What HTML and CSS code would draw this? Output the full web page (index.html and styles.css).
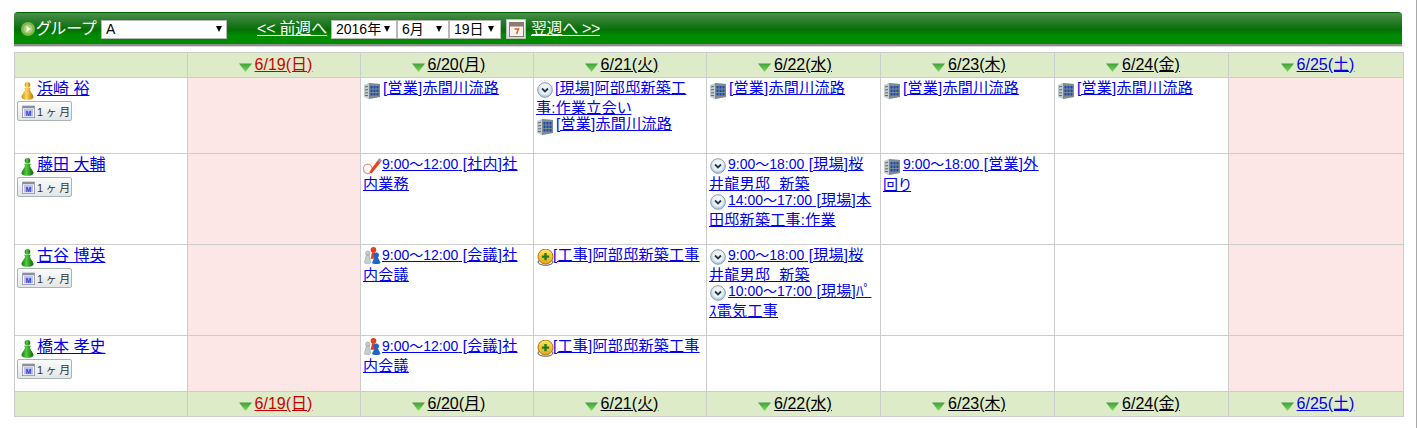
FILE: index.html
```html
<!DOCTYPE html>
<html lang="ja">
<head>
<meta charset="utf-8">
<title>週間スケジュール</title>
<link rel="stylesheet" href="styles.css">
</head>
<body>
<svg class="defs" width="0" height="0" aria-hidden="true">
  <defs>
    <linearGradient id="gPawn" x1="0" x2="1" y1="0" y2="0"><stop offset="0" stop-color="#0f7a0f"/><stop offset=".4" stop-color="#52cc3f"/><stop offset="1" stop-color="#0b620b"/></linearGradient>
    <linearGradient id="yPawn" x1="0" x2="1" y1="0" y2="0"><stop offset="0" stop-color="#d08a10"/><stop offset=".4" stop-color="#ffd75a"/><stop offset="1" stop-color="#b87408"/></linearGradient>
    <linearGradient id="tri" x1="0" x2="0" y1="0" y2="1"><stop offset="0" stop-color="#3f9f3f"/><stop offset="1" stop-color="#7fdc4f"/></linearGradient>
    <linearGradient id="clk" x1="0" x2="0" y1="0" y2="1"><stop offset="0" stop-color="#f4f8fb"/><stop offset="1" stop-color="#a9d3ee"/></linearGradient>
    <linearGradient id="hat" x1="0" x2="0" y1="0" y2="1"><stop offset="0" stop-color="#ffe65a"/><stop offset="1" stop-color="#e8a317"/></linearGradient>
    <symbol id="i-tri" viewBox="0 0 13 9"><path d="M0 .5h13L6.5 9z" fill="url(#tri)"/></symbol>
    <symbol id="i-pawn-g" viewBox="0 0 13 18"><circle cx="6.500" cy="2.800" r="2.800" fill="url(#gPawn)"/><path d="M3 5.800h7L9 7.200c0 2.800 3.500 5 3.500 8 0 3.400-12 3.400-12 0 0-3 3.500-5.200 3.500-8z" fill="url(#gPawn)"/></symbol>
    <symbol id="i-pawn-y" viewBox="0 0 13 18"><circle cx="6.500" cy="2.800" r="2.800" fill="url(#yPawn)"/><path d="M3 5.800h7L9 7.200c0 2.800 3.500 5 3.500 8 0 3.400-12 3.400-12 0 0-3 3.500-5.200 3.500-8z" fill="url(#yPawn)"/></symbol>
    <symbol id="i-bld" viewBox="0 0 16 17">
      <path d="M0 3 5 1l11 1v13l-11 2-5-2z" fill="#c4ccd0"/>
      <path d="M5 1l11 1v13l-11 2z" fill="#7f8b93"/>
      <path d="M6.500 4h2v2.500h-2zM9.500 4h2v2.500h-2zM12.500 4h2v2.500h-2zM6.500 7.500h2V10h-2zM9.500 7.500h2V10h-2zM12.500 7.500h2V10h-2zM6.500 11h2v2.500h-2zM9.500 11h2v2.500h-2zM12.500 11h2v2.500h-2z" fill="#1648b0"/>
      <path d="M1 5l3-.7M1 8l3-.5M1 11l3-.3M1 13.500l3 .1" stroke="#5d6a72" stroke-width="1" fill="none"/>
    </symbol>
    <symbol id="i-clk" viewBox="0 0 16 16"><circle cx="8" cy="8" r="7.300" fill="url(#clk)" stroke="#8d979e"/><circle cx="8" cy="8" r="4.800" fill="#eef5fa"/><path d="M5 6.500l3 3 3-3" fill="none" stroke="#2b3640" stroke-width="1.800"/></symbol>
    <symbol id="i-pen" viewBox="0 0 20 18"><ellipse cx="5" cy="12" rx="4.500" ry="5" fill="none" stroke="#f08a8a" stroke-width="1.200"/><path d="M6.500 15.500 15.500 3l3 2.200L9 17z" fill="#e8421c"/><path d="M15.500 3 17 .8l3 2.200-1.500 2.200z" fill="#8a8f99"/></symbol>
    <symbol id="i-mtg" viewBox="0 0 20 20">
      <g fill="#c6cfcf" stroke="#8d9a9a" stroke-width=".6"><circle cx="5" cy="7" r="2.300"/><path d="M3.500 9h3l1.500 8c0 1.200-6.500 1.200-6.500 0z"/></g>
      <g fill="#e6401f"><circle cx="11" cy="3.500" r="3"/><path d="M9.500 6h3l1.500 7H8z"/></g>
      <g fill="#1f66c4"><circle cx="14" cy="9" r="2.800"/><path d="M12.500 11h3l3 6c0 2-9 2-9 0z"/></g>
    </symbol>
    <symbol id="i-hat" viewBox="0 0 17 17"><ellipse cx="8.500" cy="13" rx="7.500" ry="3.300" fill="#fff" stroke="#555"/><circle cx="8.500" cy="7.500" r="7.500" fill="url(#hat)" stroke="#a8750f"/><path d="M7.300 4h2.400v2.400h2.400v2.400H9.700v2.400H7.300V8.800H4.900V6.400h2.400z" fill="#1d7a1d"/></symbol>
    <symbol id="i-month" viewBox="0 0 16 16"><rect x=".5" y="1.500" width="15" height="14" fill="#f4f4fa" stroke="#8f93a8"/><rect x="1" y="1" width="14" height="3" fill="#8a8ea0"/><rect x="2.500" y="5" width="11" height="9" fill="#b9bff0"/><text class="mletter" x="8" y="13">M</text></symbol>
  </defs>
</svg>

<main class="page">
  <form class="bar">
    <svg class="play" width="14" height="14" viewBox="0 0 14 14"><circle cx="7" cy="7" r="7" fill="#7fb84a"/><circle cx="7" cy="7" r="4.500" fill="#a6cf7a"/><path d="M5.500 3.800 9.800 7l-4.300 3.200z" fill="#f4f8ee"/></svg>
    <span class="bar-label">グループ</span>
    <span class="sel sel-group"><select aria-label="グループ"><option>A</option></select></span>
    <a class="nav nav-prev" href="#">&lt;&lt; 前週へ</a>
    <span class="dates">
      <span class="sel sel-y"><select aria-label="年"><option>2016年</option></select></span>
      <span class="sel sel-m"><select aria-label="月"><option>6月</option></select></span>
      <span class="sel sel-d"><select aria-label="日"><option>19日</option></select></span>
    </span>
    <button class="calbtn" type="button" aria-label="カレンダー">
      <svg width="15" height="15" viewBox="0 0 15 15"><rect x=".5" y=".5" width="14" height="14" fill="#f7f2ea" stroke="#8a7a72"/><rect x="1" y="1" width="13" height="3.500" fill="#8f7a70"/><path d="M5.500 7h4L7.500 12" fill="none" stroke="#e0622a" stroke-width="1.500"/></svg>
    </button>
    <a class="nav nav-next" href="#">翌週へ &gt;&gt;</a>
  </form>

  <table class="sched">
    <colgroup><col class="c1"><col class="c1"><col class="c1"><col class="c1"><col class="c2"><col class="c2"><col class="c2"><col class="c3"></colgroup>
    <thead>
      <tr class="days">
        <th></th>
        <th><svg class="tri"><use href="#i-tri"/></svg><a class="sun" href="#">6/19(日)</a></th>
        <th><svg class="tri"><use href="#i-tri"/></svg><a class="wk" href="#">6/20(月)</a></th>
        <th><svg class="tri"><use href="#i-tri"/></svg><a class="wk" href="#">6/21(火)</a></th>
        <th><svg class="tri"><use href="#i-tri"/></svg><a class="wk" href="#">6/22(水)</a></th>
        <th><svg class="tri"><use href="#i-tri"/></svg><a class="wk" href="#">6/23(木)</a></th>
        <th><svg class="tri"><use href="#i-tri"/></svg><a class="wk" href="#">6/24(金)</a></th>
        <th><svg class="tri"><use href="#i-tri"/></svg><a class="sat" href="#">6/25(土)</a></th>
      </tr>
    </thead>
    <tbody>
      <tr>
        <td class="who"><div class="name"><svg class="pawn"><use href="#i-pawn-y"/></svg><a href="#">浜崎 裕</a></div><button class="month" type="button"><svg class="mi"><use href="#i-month"/></svg>1 ヶ 月</button></td>
        <td class="off"></td>
        <td><div class="ev"><svg class="ic bld"><use href="#i-bld"/></svg><a href="#">[営業]赤間川流路</a></div></td>
        <td><div class="ev"><svg class="ic clk"><use href="#i-clk"/></svg><a href="#">[現場]阿部邸新築工<br>事:作業立会い</a></div><div class="ev"><svg class="ic bld"><use href="#i-bld"/></svg><a href="#">[営業]赤間川流路</a></div></td>
        <td><div class="ev"><svg class="ic bld"><use href="#i-bld"/></svg><a href="#">[営業]赤間川流路</a></div></td>
        <td><div class="ev"><svg class="ic bld"><use href="#i-bld"/></svg><a href="#">[営業]赤間川流路</a></div></td>
        <td><div class="ev"><svg class="ic bld"><use href="#i-bld"/></svg><a href="#">[営業]赤間川流路</a></div></td>
        <td class="off"></td>
      </tr>
      <tr>
        <td class="who"><div class="name"><svg class="pawn"><use href="#i-pawn-g"/></svg><a href="#">藤田 大輔</a></div><button class="month" type="button"><svg class="mi"><use href="#i-month"/></svg>1 ヶ 月</button></td>
        <td class="off"></td>
        <td><div class="ev"><svg class="ic pen"><use href="#i-pen"/></svg><a href="#"><span class="t">9:00～12:00</span> [社内]社<br>内業務</a></div></td>
        <td></td>
        <td><div class="ev"><svg class="ic clk"><use href="#i-clk"/></svg><a href="#"><span class="t">9:00～18:00</span> [現場]桜<br>井龍男邸&nbsp; 新築</a></div><div class="ev"><svg class="ic clk"><use href="#i-clk"/></svg><a href="#"><span class="t">14:00～17:00</span> [現場]本<br>田邸新築工事:作業</a></div></td>
        <td><div class="ev"><svg class="ic bld"><use href="#i-bld"/></svg><a href="#"><span class="t">9:00～18:00</span> [営業]外<br>回り</a></div></td>
        <td></td>
        <td class="off"></td>
      </tr>
      <tr>
        <td class="who"><div class="name"><svg class="pawn"><use href="#i-pawn-g"/></svg><a href="#">古谷 博英</a></div><button class="month" type="button"><svg class="mi"><use href="#i-month"/></svg>1 ヶ 月</button></td>
        <td class="off"></td>
        <td><div class="ev"><svg class="ic mtg"><use href="#i-mtg"/></svg><a href="#"><span class="t">9:00～12:00</span> [会議]社<br>内会議</a></div></td>
        <td><div class="ev"><svg class="ic hat"><use href="#i-hat"/></svg><a href="#">[工事]阿部邸新築工事</a></div></td>
        <td><div class="ev"><svg class="ic clk"><use href="#i-clk"/></svg><a href="#"><span class="t">9:00～18:00</span> [現場]桜<br>井龍男邸&nbsp; 新築</a></div><div class="ev"><svg class="ic clk"><use href="#i-clk"/></svg><a href="#"><span class="t">10:00～17:00</span> [現場]ﾊﾟ<br>ｽ電気工事</a></div></td>
        <td></td>
        <td></td>
        <td class="off"></td>
      </tr>
      <tr>
        <td class="who"><div class="name"><svg class="pawn"><use href="#i-pawn-g"/></svg><a href="#">橋本 孝史</a></div><button class="month" type="button"><svg class="mi"><use href="#i-month"/></svg>1 ヶ 月</button></td>
        <td class="off"></td>
        <td><div class="ev"><svg class="ic mtg"><use href="#i-mtg"/></svg><a href="#"><span class="t">9:00～12:00</span> [会議]社<br>内会議</a></div></td>
        <td><div class="ev"><svg class="ic hat"><use href="#i-hat"/></svg><a href="#">[工事]阿部邸新築工事</a></div></td>
        <td></td>
        <td></td>
        <td></td>
        <td class="off"></td>
      </tr>
    </tbody>
    <tfoot>
      <tr class="days">
        <th></th>
        <th><svg class="tri"><use href="#i-tri"/></svg><a class="sun" href="#">6/19(日)</a></th>
        <th><svg class="tri"><use href="#i-tri"/></svg><a class="wk" href="#">6/20(月)</a></th>
        <th><svg class="tri"><use href="#i-tri"/></svg><a class="wk" href="#">6/21(火)</a></th>
        <th><svg class="tri"><use href="#i-tri"/></svg><a class="wk" href="#">6/22(水)</a></th>
        <th><svg class="tri"><use href="#i-tri"/></svg><a class="wk" href="#">6/23(木)</a></th>
        <th><svg class="tri"><use href="#i-tri"/></svg><a class="wk" href="#">6/24(金)</a></th>
        <th><svg class="tri"><use href="#i-tri"/></svg><a class="sat" href="#">6/25(土)</a></th>
      </tr>
    </tfoot>
  </table>
</main>
</body>
</html>
```

FILE: styles.css
```css
* { box-sizing: border-box; }

html, body { margin: 0; background: #fff; }

body {
  font-family: "Liberation Sans", "Noto Sans CJK JP", sans-serif;
  font-feature-settings: "palt";
  font-size: 15px;
  color: #000;
}

.defs { display: block; width: 0; height: 0; overflow: hidden; }

.mletter { font: bold 8px "Liberation Sans", sans-serif; fill: #2a35c8; text-anchor: middle; }

.page {
  width: 1417px;
  height: 428px;
  padding: 12px 14px 0;
  border-right: 1px solid #a8a8a8;
}

/* top bar */
.bar {
  display: flex;
  align-items: center;
  width: 1388px;
  height: 34px;
  padding: 1px 0 0 7px;
  background: linear-gradient(#4a8f4a 0, #2a7d2a 25%, #057005 55%, #008c00 72%, #008a00 100%);
  border-top: 1px solid #006400;
  border-bottom: 2px solid #8a8f8a;
  border-radius: 4px 4px 0 0;
  box-shadow: 0 1px 0 #d8d8d8;
}

.play { flex: none; }

.bar-label { margin-left: 1px; width: 65px; font-size: 16px; letter-spacing: .5px; line-height: 18px; color: #fff; }

.nav { font-size: 16px; line-height: 18px; color: #fff; white-space: nowrap; }
.nav-prev { margin-left: 30px; width: 74px; letter-spacing: -.2px; }
.nav-next { letter-spacing: -.4px; }

.dates { display: flex; }

.sel { position: relative; display: block; height: 19px; }
.sel select {
  appearance: none;
  display: block;
  width: 100%;
  height: 100%;
  padding: 0 0 0 4px;
  border: 1px solid #b8b8b8;
  border-radius: 0;
  background: #fff;
  font: 14px "Liberation Sans", "Noto Sans CJK JP", sans-serif;
  color: #000;
}
.sel::after {
  content: "";
  position: absolute;
  top: 6px;
  right: 7px;
  border-style: solid;
  border-width: 6px 3.500px 0;
  border-color: #000 transparent transparent;
  pointer-events: none;
}

.sel-group { width: 126px; }
.sel-group::after { right: 5px; }
.sel-y { width: 66px; }
.sel-m { width: 52px; }
.sel-d { width: 52px; }

.calbtn {
  display: flex;
  align-items: center;
  justify-content: center;
  width: 20px;
  height: 20px;
  margin: 0 5px;
  padding: 0;
  border: 1px solid #b9c0c0;
  background: linear-gradient(#f6f6fb, #d8dbe6);
}

/* table */
.sched {
  display: table;
  table-layout: fixed;
  width: 1389px;
  margin-top: 6px;
  border-collapse: collapse;
}

.c1 { width: 173px; }
.c2 { width: 174px; }
.c3 { width: 175px; }

.sched th, .sched td { border: 1px solid #cccccc; }

.days th {
  height: 25px;
  padding: 0 0 0 3px;
  background: #deebc9;
  font-size: 16px;
  font-weight: 400;
  line-height: 20px;
  text-align: center;
  vertical-align: middle;
}

.tri { width: 13px; height: 9px; margin-right: 3px; vertical-align: -2px; }

.wk { color: #000; }
.sun { color: #cc0000; }
.sat { color: #0000ee; }

.sched td { padding: 2px 2px 16px; vertical-align: top; line-height: 16px; background: #fff; }
.sched td.off { background: #fde6e6; }
.sched td.who { padding: 1px 2px 12px; }

a { color: #0000ee; text-decoration: underline; }

.ev { font-size: 15px; letter-spacing: .3px; line-height: 16px; }

.t { font-size: 14px; letter-spacing: 0; }

.ic { display: inline-block; vertical-align: top; }
.bld { width: 16px; height: 17px; margin: 2px 3px 2px 1px; }
.clk { width: 16px; height: 16px; margin: 2px 2px 2px 1px; }
.pen { width: 19px; height: 18px; margin: 1px 0 1px 0; }
.mtg { width: 19px; height: 20px; margin: -1px 0 1px 0; }
.hat { width: 17px; height: 17px; margin: 2px -1px 1px 1px; }

.name { display: flex; align-items: flex-start; height: 20px; padding-left: 4px; font-size: 16px; line-height: 20px; }
.pawn { flex: none; width: 13px; height: 18px; margin: 3px 3px 0 0; }

.month {
  display: flex;
  align-items: center;
  width: 55px;
  height: 20px;
  margin: 2px 0 0 0;
  padding: 0 0 0 4px;
  border: 1px solid #a9b4b4;
  border-radius: 2px;
  background: linear-gradient(#fcfcfc, #e3e6e6);
  font: 11px "Liberation Sans", "Noto Sans CJK JP", sans-serif;
  word-spacing: -.5px;
  color: #333;
  white-space: nowrap;
}
.mi { flex: none; width: 13px; height: 13px; margin-right: 2px; }
```
